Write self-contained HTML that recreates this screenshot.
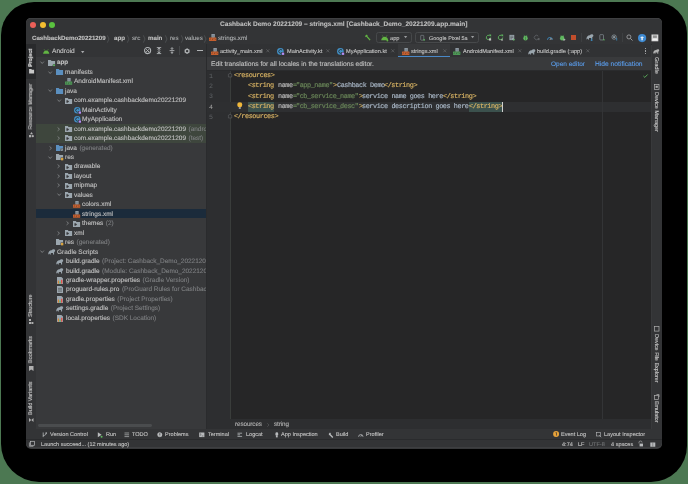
<!DOCTYPE html>
<html><head><meta charset="utf-8"><style>
html,body{margin:0;padding:0;width:688px;height:484px;overflow:hidden;background:#4c7852;}
.t{position:absolute;white-space:nowrap;will-change:transform;text-rendering:geometricPrecision;-webkit-text-stroke:0.12px currentColor;}
.r{position:absolute;}
svg.r{overflow:visible;}
</style></head><body>
<div class="r" style="left:1px;top:2px;width:685.6px;height:479.6px;background:#000;border-radius:33px 31px 36px 38px;"></div>
<div class="r" style="left:26px;top:18px;width:636px;height:430.5px;background:#38393b;border-radius:5px;"></div>
<div class="r" style="left:26px;top:18px;width:636px;height:26px;background:#333436;border-radius:5px 5px 0 0;box-shadow:inset 0 0.5px 0 #4a4b4d;"></div>
<div class="r" style="left:30.05px;top:21.6px;width:6px;height:6px;border-radius:50%;background:#ec5f58;"></div>
<div class="r" style="left:39.70px;top:21.6px;width:6px;height:6px;border-radius:50%;background:#f4bd30;"></div>
<div class="r" style="left:49.00px;top:21.6px;width:6px;height:6px;border-radius:50%;background:#5ac23f;"></div>
<div class="t" style="left:220.40px;top:20.10px;font-size:6.58px;line-height:10px;color:#bdbdbd;font-weight:bold;font-family:'Liberation Sans', sans-serif;">Cashback Demo 20221209 – strings.xml [Cashback_Demo_20221209.app.main]</div>
<div class="t" style="left:32.30px;top:33.60px;font-size:6.16px;line-height:10px;color:#c0c0c0;font-weight:bold;font-family:'Liberation Sans', sans-serif;">CashbackDemo20221209</div>
<div class="t" style="left:113.70px;top:33.60px;font-size:6.16px;line-height:10px;color:#c0c0c0;font-weight:bold;font-family:'Liberation Sans', sans-serif;">app</div>
<div class="t" style="left:132.00px;top:33.60px;font-size:6.16px;line-height:10px;color:#a9abad;font-weight:normal;font-family:'Liberation Sans', sans-serif;">src</div>
<div class="t" style="left:148.30px;top:33.60px;font-size:6.16px;line-height:10px;color:#c0c0c0;font-weight:bold;font-family:'Liberation Sans', sans-serif;">main</div>
<div class="t" style="left:169.70px;top:33.60px;font-size:6.16px;line-height:10px;color:#a9abad;font-weight:normal;font-family:'Liberation Sans', sans-serif;">res</div>
<div class="t" style="left:185.40px;top:33.60px;font-size:6.16px;line-height:10px;color:#a9abad;font-weight:normal;font-family:'Liberation Sans', sans-serif;">values</div>
<div class="t" style="left:217.90px;top:33.60px;font-size:6.16px;line-height:10px;color:#a9abad;font-weight:normal;font-family:'Liberation Sans', sans-serif;">strings.xml</div>
<svg class="r" style="left:107.40px;top:34.60px;" width="2.4" height="8" viewBox="0 0 2.4 8"><path d="M0.3 0.3L2 4L0.3 7.7" stroke="#5d5f61" stroke-width="0.6" fill="none"/></svg>
<svg class="r" style="left:127.00px;top:34.60px;" width="2.4" height="8" viewBox="0 0 2.4 8"><path d="M0.3 0.3L2 4L0.3 7.7" stroke="#5d5f61" stroke-width="0.6" fill="none"/></svg>
<svg class="r" style="left:143.30px;top:34.60px;" width="2.4" height="8" viewBox="0 0 2.4 8"><path d="M0.3 0.3L2 4L0.3 7.7" stroke="#5d5f61" stroke-width="0.6" fill="none"/></svg>
<svg class="r" style="left:164.60px;top:34.60px;" width="2.4" height="8" viewBox="0 0 2.4 8"><path d="M0.3 0.3L2 4L0.3 7.7" stroke="#5d5f61" stroke-width="0.6" fill="none"/></svg>
<svg class="r" style="left:180.80px;top:34.60px;" width="2.4" height="8" viewBox="0 0 2.4 8"><path d="M0.3 0.3L2 4L0.3 7.7" stroke="#5d5f61" stroke-width="0.6" fill="none"/></svg>
<svg class="r" style="left:204.30px;top:34.60px;" width="2.4" height="8" viewBox="0 0 2.4 8"><path d="M0.3 0.3L2 4L0.3 7.7" stroke="#5d5f61" stroke-width="0.6" fill="none"/></svg>
<svg class="r" style="left:209.20px;top:34.30px;" width="7.4" height="7" viewBox="0 0 7.2 6.8"><rect x="2.4" y="0" width="3.2" height="3.6" fill="#9ba6ae"/><path d="M3.1 1.1h1.8M3.1 2.2h1.8" stroke="#4a5a6a" stroke-width="0.45"/><rect x="0" y="3.4" width="7.2" height="3.4" rx="0.4" fill="#c9602e"/><path d="M1.6 4.3l-0.7 0.8 0.7 0.8M3.2 6l0.8-1.8M5.6 4.3l0.7 0.8-0.7 0.8" stroke="#2b2b2b" stroke-width="0.4" fill="none"/></svg>
<svg class="r" style="left:363.50px;top:33.80px;" width="7.5" height="7.5" viewBox="0 0 16 16"><path d="M2 4l4-3 2 2-1 1 7 8-2 2-7-8-1 1z" fill="#62b543"/></svg>
<div class="r" style="left:376.3px;top:32.3px;width:35.4px;height:10.3px;border:0.7px solid #47494b;border-radius:2.5px;box-sizing:border-box;"></div>
<svg class="r" style="left:381.20px;top:34.60px;" width="7.4" height="6.4" viewBox="0 0 7.4 6.4"><path d="M0.2 5.2C0.4 3.2 1.8 1.7 3.7 1.7S7 3.2 7.2 5.2z" fill="#62b543"/><path d="M1.3 0.3l.9 1.5M6.1 0.3l-.9 1.5" stroke="#62b543" stroke-width="0.5"/><circle cx="6.4" cy="5.6" r="0.9" fill="#62b543"/></svg>
<div class="t" style="left:390.00px;top:33.50px;font-size:5.69px;line-height:10px;color:#c0c0c0;font-weight:normal;font-family:'Liberation Sans', sans-serif;">app</div>
<svg class="r" style="left:403.80px;top:36.30px;" width="3.2" height="2.2" viewBox="0 0 3.2 2.2"><path d="M0 0h3.2L1.6 2.2z" fill="#9a9c9e"/></svg>
<div class="r" style="left:414.7px;top:32.3px;width:64.8px;height:10.3px;border:0.7px solid #47494b;border-radius:2.5px;box-sizing:border-box;"></div>
<svg class="r" style="left:420.30px;top:33.80px;" width="5.5" height="7.5" viewBox="0 0 16 16"><rect x="2" y="1" width="9" height="14" rx="1.5" fill="none" stroke="#9aa5ad" stroke-width="1.4"/><circle cx="12" cy="14" r="2.5" fill="#5fb85f"/></svg>
<div class="t" style="left:428.60px;top:33.50px;font-size:5.48px;line-height:10px;color:#c0c0c0;font-weight:normal;font-family:'Liberation Sans', sans-serif;">Google Pixel 5a</div>
<svg class="r" style="left:471.40px;top:36.30px;" width="3.2" height="2.2" viewBox="0 0 3.2 2.2"><path d="M0 0h3.2L1.6 2.2z" fill="#9a9c9e"/></svg>
<svg class="r" style="left:484.50px;top:34.00px;" width="7" height="7" viewBox="0 0 16 16"><path d="M13 8a5 5 0 1 1-2-4" stroke="#5fb85f" stroke-width="2" fill="none"/><path d="M9 1h5v5z" fill="#5fb85f"/><rect x="9" y="10" width="5" height="5" fill="#c0c0c0"/></svg>
<svg class="r" style="left:496.80px;top:34.00px;" width="7" height="7" viewBox="0 0 16 16"><path d="M13 8a5 5 0 1 1-2-4" stroke="#5fb85f" stroke-width="2" fill="none"/><path d="M9 1h5v5z" fill="#5fb85f"/><path d="M9 15l2.5-5 2.5 5z" fill="#c0c0c0"/></svg>
<svg class="r" style="left:509.00px;top:34.00px;" width="7" height="7" viewBox="0 0 16 16"><rect x="1" y="2" width="11" height="12" fill="#9aa5ad"/><path d="M3 5h7M3 8h7M3 11h4" stroke="#333" stroke-width="1"/><path d="M10 10l4 3-4 3z" fill="#5fb85f"/></svg>
<svg class="r" style="left:521.50px;top:34.00px;" width="7" height="7" viewBox="0 0 16 16"><ellipse cx="8" cy="9.5" rx="5" ry="5.5" fill="#5fb85f"/><path d="M4 2l2 2M12 2l-2 2" stroke="#5fb85f" stroke-width="1.3"/><path d="M8 6v8" stroke="#2f3133" stroke-width="0.8"/></svg>
<svg class="r" style="left:533.30px;top:34.00px;" width="7" height="7" viewBox="0 0 16 16"><path d="M12 5a5 5 0 1 0 0 6" stroke="#5d6063" stroke-width="2" fill="none"/><path d="M11 9h4v5h-4z" fill="#5d6063"/></svg>
<svg class="r" style="left:545.60px;top:34.50px;" width="7.8" height="6.5" viewBox="0 0 16 16"><path d="M2 12a6 6 0 0 1 12 0" stroke="#3d8fc6" stroke-width="2" fill="none"/><path d="M8 12l3-5" stroke="#c0c0c0" stroke-width="1.6"/><path d="M10 12a4 4 0 0 1 4-3" stroke="#c0c0c0" stroke-width="1.2" fill="none"/></svg>
<svg class="r" style="left:558.80px;top:34.00px;" width="7.2" height="7" viewBox="0 0 16 16"><ellipse cx="7" cy="9.5" rx="5" ry="5.5" fill="#5fb85f"/><path d="M3 2l2 2M11 2l-2 2" stroke="#5fb85f" stroke-width="1.3"/><path d="M10 10l5 3-5 3z" fill="#c0c0c0"/></svg>
<div class="r" style="left:571.40px;top:35.20px;width:5.00px;height:5.00px;background:#c24e2c;"></div>
<div class="r" style="left:581.40px;top:33.00px;width:0.60px;height:9.00px;background:#3d3f41;"></div>
<svg class="r" style="left:585.60px;top:34.20px;" width="7.8" height="7" viewBox="0 0 7.4 7"><path d="M0.2 5.4C0.2 3 1.4 1.2 3.6 1.2 4.4 0.2 6 0 6.8 0.7 7.4 1.2 7.3 2.1 6.8 2.5L6.1 3.2V5.4H5V4.1H2.8V5.4H1.8V4.4C1.3 4.8 0.8 5.1 0.2 5.4z" fill="#9ba6ae"/><path d="M5.4 4.2v2.6M4.4 5.9l1 1 1-1" stroke="#3d8fc6" stroke-width="0.8" fill="none"/></svg>
<svg class="r" style="left:599.30px;top:34.00px;" width="6.5" height="7" viewBox="0 0 16 16"><rect x="2" y="1" width="9" height="13" rx="1.5" fill="none" stroke="#9aa5ad" stroke-width="1.4"/><path d="M9 15l3-4 3 4z" fill="#5fb85f"/></svg>
<svg class="r" style="left:610.70px;top:34.00px;" width="7" height="7" viewBox="0 0 16 16"><circle cx="7" cy="7" r="5" fill="none" stroke="#9aa5ad" stroke-width="1.6"/><rect x="5" y="5" width="4" height="4" fill="#9aa5ad"/><path d="M13 9v6" stroke="#3d8fc6" stroke-width="1.8"/></svg>
<div class="r" style="left:622.00px;top:33.00px;width:0.60px;height:9.00px;background:#3d3f41;"></div>
<svg class="r" style="left:626.00px;top:34.00px;" width="7.2" height="7.2" viewBox="0 0 16 16"><circle cx="6.5" cy="6.5" r="4.5" fill="none" stroke="#b5b7b9" stroke-width="1.6"/><path d="M10 10l4.5 4.5" stroke="#b5b7b9" stroke-width="1.8"/></svg>
<svg class="r" style="left:638.00px;top:33.60px;" width="8.2" height="8.2" viewBox="0 0 16 16"><circle cx="8" cy="8" r="8" fill="#3e8ad2"/><path d="M4 8l4-3.5 4 3.5h-2.5v4h-3v-4z" fill="#e8eef5"/></svg>
<svg class="r" style="left:650.50px;top:33.70px;" width="7.8" height="7.8" viewBox="0 0 16 16"><rect x="1" y="1" width="14" height="14" fill="#d8d8d8"/><rect x="4" y="3" width="8" height="5" fill="#8f8f8f"/><rect x="3" y="10" width="10" height="3" fill="#f2f2f2"/></svg>
<div class="r" style="left:26.00px;top:43.60px;width:636.00px;height:0.70px;background:#2a2b2d;"></div>
<div class="r" style="left:26.00px;top:44.30px;width:9.70px;height:384.70px;background:#333436;"></div>
<div class="r" style="left:26.00px;top:44.30px;width:9.70px;height:34.80px;background:#292a2c;"></div>
<div class="r" style="left:35.70px;top:44.30px;width:0.70px;height:384.70px;background:#2a2b2d;"></div>
<div class="t" style="left:27.20px;top:50.00px;width:8px;height:16.80px;line-height:8px;text-align:center;writing-mode:vertical-rl;font-size:5.3px;color:#e0e0e0;font-weight:bold;font-family:'Liberation Sans', sans-serif;transform:rotate(180deg);">Project</div>
<svg class="r" style="left:28.60px;top:69.40px;" width="5.2" height="4.6" viewBox="0 0 5 4.6"><path d="M0 0h2.2l.6.7H5V4.6H0z" fill="#c8c8c8"/></svg>
<div class="t" style="left:26.60px;top:84.00px;width:8px;height:45.50px;line-height:8px;text-align:center;writing-mode:vertical-rl;font-size:5.4px;color:#c6c6c6;font-weight:normal;font-family:'Liberation Sans', sans-serif;transform:rotate(180deg);">Resource Manager</div>
<svg class="r" style="left:28.60px;top:132.00px;" width="5" height="5.5" viewBox="0 0 5 5.5"><path d="M2.5 0L4 2.2H1z" fill="#b0b0b0"/><rect x="0" y="3" width="2.2" height="2.3" fill="#b0b0b0"/><circle cx="3.8" cy="4.2" r="1.1" fill="#b0b0b0"/></svg>
<div class="t" style="left:27.20px;top:293.60px;width:8px;height:23.20px;line-height:8px;text-align:center;writing-mode:vertical-rl;font-size:5.6px;color:#c6c6c6;font-weight:normal;font-family:'Liberation Sans', sans-serif;transform:rotate(180deg);">Structure</div>
<svg class="r" style="left:29.00px;top:319.00px;" width="4.6" height="5.6" viewBox="0 0 4.6 5.6"><rect x="0" y="0" width="2" height="2" fill="#b0b0b0"/><rect x="2.4" y="3" width="2" height="2" fill="#b0b0b0"/><rect x="0" y="3" width="2" height="2" fill="#b0b0b0"/></svg>
<div class="t" style="left:27.20px;top:336.30px;width:8px;height:27.30px;line-height:8px;text-align:center;writing-mode:vertical-rl;font-size:5.45px;color:#c6c6c6;font-weight:normal;font-family:'Liberation Sans', sans-serif;transform:rotate(180deg);">Bookmarks</div>
<svg class="r" style="left:29.00px;top:366.00px;" width="4.5" height="5" viewBox="0 0 4.5 5"><path d="M0 0h4.5v5L2.25 3.5 0 5z" fill="#b0b0b0"/></svg>
<div class="t" style="left:27.20px;top:381.30px;width:8px;height:34.10px;line-height:8px;text-align:center;writing-mode:vertical-rl;font-size:5.5px;color:#c6c6c6;font-weight:normal;font-family:'Liberation Sans', sans-serif;transform:rotate(180deg);">Build Variants</div>
<svg class="r" style="left:29.00px;top:418.00px;" width="4.5" height="4" viewBox="0 0 4.5 4"><path d="M0 0L2.25 2 4.5 0v4L2.25 2 0 4z" fill="#b0b0b0"/></svg>
<div class="r" style="left:36.40px;top:44.30px;width:169.60px;height:384.70px;background:#38393b;"></div>
<div class="r" style="left:36.40px;top:44.30px;width:169.60px;height:12.80px;background:#333436;"></div>
<div class="r" style="left:206.00px;top:44.30px;width:0.70px;height:384.70px;background:#2a2b2d;"></div>
<svg class="r" style="left:42.80px;top:48.60px;" width="6.4" height="4.8" viewBox="0 0 6.4 4.8"><path d="M0.1 4.8C0.3 2.9 1.5 1.4 3.2 1.4S6.1 2.9 6.3 4.8z" fill="#62b543"/><path d="M1.1 0.2l.8 1.4M5.3 0.2l-.8 1.4" stroke="#62b543" stroke-width="0.45"/></svg>
<div class="t" style="left:51.80px;top:47.20px;font-size:6.61px;line-height:10px;color:#c0c0c0;font-weight:normal;font-family:'Liberation Sans', sans-serif;">Android</div>
<svg class="r" style="left:81.00px;top:50.90px;" width="3.4" height="2.2" viewBox="0 0 3.4 2.2"><path d="M0 0h3.4L1.7 2.2z" fill="#a8aaac"/></svg>
<svg class="r" style="left:143.80px;top:47.30px;" width="7.2" height="7.2" viewBox="0 0 7.2 7.2"><circle cx="3.6" cy="3.6" r="3.05" fill="none" stroke="#b0b3b5" stroke-width="1.1"/><path d="M2.2 2.2l2.8 2.8M5 2.2L2.2 5" stroke="#b0b3b5" stroke-width="1"/></svg>
<svg class="r" style="left:156.20px;top:47.30px;" width="6" height="7.2" viewBox="0 0 6 7.2"><path d="M0.8 0.6h4.4M0.8 6.6h4.4M3 1.2v4.8M1.6 2.4L3 1.1 4.4 2.4M1.6 4.8L3 6.1 4.4 4.8" stroke="#b0b3b5" stroke-width="0.9" fill="none"/></svg>
<svg class="r" style="left:169.10px;top:47.30px;" width="6" height="7.2" viewBox="0 0 6 7.2"><path d="M0.6 3.6h4.8M3 0.2v2.2M3 4.8V7M1.8 1.2L3 2.4 4.2 1.2M1.8 6L3 4.8 4.2 6" stroke="#b0b3b5" stroke-width="0.9" fill="none"/></svg>
<div class="r" style="left:179.00px;top:46.40px;width:0.60px;height:8.60px;background:#46484a;"></div>
<svg class="r" style="left:184.40px;top:47.80px;" width="6.2" height="6.2" viewBox="0 0 6.2 6.2"><path d="M3.1 0.2L5.6 1.65V4.55L3.1 6L0.6 4.55V1.65z" fill="#b0b3b5"/><circle cx="3.1" cy="3.1" r="1.2" fill="#333436"/></svg>
<div class="r" style="left:197.10px;top:50.40px;width:5.80px;height:1.00px;background:#b0b3b5;"></div>
<div class="r" style="left:36.40px;top:124.40px;width:169.60px;height:18.60px;background:#3e463d;"></div>
<div class="r" style="left:36.40px;top:208.80px;width:169.60px;height:9.10px;background:#1b2b3b;"></div>
<div style="position:absolute;left:36.4px;top:57.1px;width:169.6px;height:366px;overflow:hidden;">
<svg class="r" style="left:3.60px;top:4.00px;" width="4.4" height="3.2" viewBox="0 0 4.4 3.2"><path d="M0.5 0.6L2.2 2.5L3.9 0.6" stroke="#8d8f91" stroke-width="0.75" fill="none"/></svg>
<svg class="r" style="left:11.90px;top:2.70px;" width="7.1" height="6.0" viewBox="0 0 7.4 6.2"><path d="M0 0h2.9l0.8 0.9H7.4V6.2H0z" fill="#9ba6ae"/><circle cx="6.3" cy="5.5" r="1.4" fill="#38393b"/><circle cx="6.3" cy="5.5" r="1.05" fill="#5fb85f"/></svg>
<div class="t" style="left:20.60px;top:1.40px;font-size:6.3px;line-height:10px;color:#c0c0c0;font-weight:bold;font-family:'Liberation Sans', sans-serif;">app</div>
<svg class="r" style="left:11.80px;top:13.46px;" width="4.4" height="3.2" viewBox="0 0 4.4 3.2"><path d="M0.5 0.6L2.2 2.5L3.9 0.6" stroke="#8d8f91" stroke-width="0.75" fill="none"/></svg>
<svg class="r" style="left:19.90px;top:12.15px;" width="7.1" height="6.0" viewBox="0 0 7.4 6.2"><path d="M0 0h2.9l0.8 0.9H7.4V6.2H0z" fill="#5b8fbf"/></svg>
<div class="t" style="left:28.60px;top:10.86px;font-size:6.5px;line-height:10px;color:#c0c0c0;font-weight:normal;font-family:'Liberation Sans', sans-serif;">manifests</div>
<svg class="r" style="left:29.10px;top:21.21px;" width="7.2" height="6.8" viewBox="0 0 7.2 6.8"><rect x="2.4" y="0" width="3.2" height="3.6" fill="#9ba6ae"/><path d="M3.1 1.1h1.8M3.1 2.2h1.8" stroke="#4a5a6a" stroke-width="0.45"/><rect x="0" y="3.4" width="7.2" height="3.4" rx="0.4" fill="#4e9a57"/><path d="M1.6 4.3l-0.7 0.8 0.7 0.8M3.2 6l0.8-1.8M5.6 4.3l0.7 0.8-0.7 0.8" stroke="#2b2b2b" stroke-width="0.4" fill="none"/></svg>
<div class="t" style="left:37.70px;top:20.31px;font-size:6.5px;line-height:10px;color:#c0c0c0;font-weight:normal;font-family:'Liberation Sans', sans-serif;">AndroidManifest.xml</div>
<svg class="r" style="left:11.80px;top:32.36px;" width="4.4" height="3.2" viewBox="0 0 4.4 3.2"><path d="M0.5 0.6L2.2 2.5L3.9 0.6" stroke="#8d8f91" stroke-width="0.75" fill="none"/></svg>
<svg class="r" style="left:19.90px;top:31.06px;" width="7.1" height="6.0" viewBox="0 0 7.4 6.2"><path d="M0 0h2.9l0.8 0.9H7.4V6.2H0z" fill="#5b8fbf"/></svg>
<div class="t" style="left:28.60px;top:29.76px;font-size:6.5px;line-height:10px;color:#c0c0c0;font-weight:normal;font-family:'Liberation Sans', sans-serif;">java</div>
<svg class="r" style="left:20.30px;top:41.82px;" width="4.4" height="3.2" viewBox="0 0 4.4 3.2"><path d="M0.5 0.6L2.2 2.5L3.9 0.6" stroke="#8d8f91" stroke-width="0.75" fill="none"/></svg>
<svg class="r" style="left:29.00px;top:40.52px;" width="7.1" height="6.0" viewBox="0 0 7.4 6.2"><path d="M0 0h2.9l0.8 0.9H7.4V6.2H0z" fill="#9ba6ae"/><path d="M1.5 2.3h1.2l1.6 1.3-1.6 1.3H1.5z" fill="#3a3b3d"/></svg>
<div class="t" style="left:37.70px;top:39.22px;font-size:6.45px;line-height:10px;color:#c0c0c0;font-weight:normal;font-family:'Liberation Sans', sans-serif;">com.example.cashbackdemo20221209</div>
<svg class="r" style="left:37.30px;top:49.57px;" width="7" height="6.8" viewBox="0 0 7 6.8"><circle cx="3.3" cy="3.3" r="3.2" fill="#4191c8"/><path d="M4.9 2.1a1.8 1.8 0 1 0 0 2.4" stroke="#2a2b2d" stroke-width="0.9" fill="none"/><rect x="4.4" y="4.2" width="2.6" height="2.6" fill="#38393b"/><path d="M4.8 4.5h2.2v2.2H4.8z" fill="#b58cf5"/></svg>
<div class="t" style="left:45.70px;top:48.67px;font-size:6.5px;line-height:10px;color:#c0c0c0;font-weight:normal;font-family:'Liberation Sans', sans-serif;">MainActivity</div>
<svg class="r" style="left:37.30px;top:59.03px;" width="7" height="6.8" viewBox="0 0 7 6.8"><circle cx="3.3" cy="3.3" r="3.2" fill="#4191c8"/><path d="M4.9 2.1a1.8 1.8 0 1 0 0 2.4" stroke="#2a2b2d" stroke-width="0.9" fill="none"/><rect x="4.4" y="4.2" width="2.6" height="2.6" fill="#38393b"/><path d="M4.8 4.5h2.2v2.2H4.8z" fill="#b58cf5"/></svg>
<div class="t" style="left:45.70px;top:58.13px;font-size:6.5px;line-height:10px;color:#c0c0c0;font-weight:normal;font-family:'Liberation Sans', sans-serif;">MyApplication</div>
<svg class="r" style="left:20.90px;top:69.58px;" width="3.2" height="4.4" viewBox="0 0 3.2 4.4"><path d="M0.6 0.5L2.5 2.2L0.6 3.9" stroke="#8d8f91" stroke-width="0.75" fill="none"/></svg>
<svg class="r" style="left:29.00px;top:68.88px;" width="7.1" height="6.0" viewBox="0 0 7.4 6.2"><path d="M0 0h2.9l0.8 0.9H7.4V6.2H0z" fill="#9ba6ae"/><path d="M1.5 2.3h1.2l1.6 1.3-1.6 1.3H1.5z" fill="#3a3b3d"/></svg>
<div class="t" style="left:37.70px;top:67.58px;font-size:6.45px;line-height:10px;color:#c0c0c0;font-weight:normal;font-family:'Liberation Sans', sans-serif;">com.example.cashbackdemo20221209 <span style="color:#7d7f81;margin-left:0.7px;font-size:6.45px">(androidTest)</span></div>
<svg class="r" style="left:20.90px;top:79.04px;" width="3.2" height="4.4" viewBox="0 0 3.2 4.4"><path d="M0.6 0.5L2.5 2.2L0.6 3.9" stroke="#8d8f91" stroke-width="0.75" fill="none"/></svg>
<svg class="r" style="left:29.00px;top:78.34px;" width="7.1" height="6.0" viewBox="0 0 7.4 6.2"><path d="M0 0h2.9l0.8 0.9H7.4V6.2H0z" fill="#9ba6ae"/><path d="M1.5 2.3h1.2l1.6 1.3-1.6 1.3H1.5z" fill="#3a3b3d"/></svg>
<div class="t" style="left:37.70px;top:77.04px;font-size:6.45px;line-height:10px;color:#c0c0c0;font-weight:normal;font-family:'Liberation Sans', sans-serif;">com.example.cashbackdemo20221209 <span style="color:#7d7f81;margin-left:0.7px;font-size:6.45px">(test)</span></div>
<svg class="r" style="left:12.40px;top:88.50px;" width="3.2" height="4.4" viewBox="0 0 3.2 4.4"><path d="M0.6 0.5L2.5 2.2L0.6 3.9" stroke="#8d8f91" stroke-width="0.75" fill="none"/></svg>
<svg class="r" style="left:19.90px;top:87.80px;" width="7.1" height="6.0" viewBox="0 0 7.4 6.2"><path d="M0 0h2.9l0.8 0.9H7.4V6.2H0z" fill="#5b8fbf"/><circle cx="6" cy="5" r="1.7" fill="#38393b"/><circle cx="6" cy="5" r="1.3" fill="#9ba6ae"/><circle cx="6" cy="5" r="0.5" fill="#38393b"/></svg>
<div class="t" style="left:28.60px;top:86.50px;font-size:6.5px;line-height:10px;color:#c0c0c0;font-weight:normal;font-family:'Liberation Sans', sans-serif;">java <span style="color:#7d7f81;margin-left:0.7px;font-size:6.45px">(generated)</span></div>
<svg class="r" style="left:11.80px;top:98.55px;" width="4.4" height="3.2" viewBox="0 0 4.4 3.2"><path d="M0.5 0.6L2.2 2.5L3.9 0.6" stroke="#8d8f91" stroke-width="0.75" fill="none"/></svg>
<svg class="r" style="left:19.90px;top:97.25px;" width="7.1" height="6.0" viewBox="0 0 7.4 6.2"><path d="M0 0h2.9l0.8 0.9H7.4V6.2H0z" fill="#9ba6ae"/><rect x="4.8" y="3.6" width="2.9" height="2.9" fill="#38393b"/><rect x="5.2" y="4" width="2.4" height="2.6" fill="#d9a33e"/></svg>
<div class="t" style="left:28.60px;top:95.95px;font-size:6.5px;line-height:10px;color:#c0c0c0;font-weight:normal;font-family:'Liberation Sans', sans-serif;">res</div>
<svg class="r" style="left:20.90px;top:107.40px;" width="3.2" height="4.4" viewBox="0 0 3.2 4.4"><path d="M0.6 0.5L2.5 2.2L0.6 3.9" stroke="#8d8f91" stroke-width="0.75" fill="none"/></svg>
<svg class="r" style="left:29.00px;top:106.70px;" width="7.1" height="6.0" viewBox="0 0 7.4 6.2"><path d="M0 0h2.9l0.8 0.9H7.4V6.2H0z" fill="#9ba6ae"/><path d="M1.5 2.3h1.2l1.6 1.3-1.6 1.3H1.5z" fill="#3a3b3d"/></svg>
<div class="t" style="left:37.70px;top:105.40px;font-size:6.5px;line-height:10px;color:#c0c0c0;font-weight:normal;font-family:'Liberation Sans', sans-serif;">drawable</div>
<svg class="r" style="left:20.90px;top:116.86px;" width="3.2" height="4.4" viewBox="0 0 3.2 4.4"><path d="M0.6 0.5L2.5 2.2L0.6 3.9" stroke="#8d8f91" stroke-width="0.75" fill="none"/></svg>
<svg class="r" style="left:29.00px;top:116.16px;" width="7.1" height="6.0" viewBox="0 0 7.4 6.2"><path d="M0 0h2.9l0.8 0.9H7.4V6.2H0z" fill="#9ba6ae"/><path d="M1.5 2.3h1.2l1.6 1.3-1.6 1.3H1.5z" fill="#3a3b3d"/></svg>
<div class="t" style="left:37.70px;top:114.86px;font-size:6.5px;line-height:10px;color:#c0c0c0;font-weight:normal;font-family:'Liberation Sans', sans-serif;">layout</div>
<svg class="r" style="left:20.90px;top:126.32px;" width="3.2" height="4.4" viewBox="0 0 3.2 4.4"><path d="M0.6 0.5L2.5 2.2L0.6 3.9" stroke="#8d8f91" stroke-width="0.75" fill="none"/></svg>
<svg class="r" style="left:29.00px;top:125.62px;" width="7.1" height="6.0" viewBox="0 0 7.4 6.2"><path d="M0 0h2.9l0.8 0.9H7.4V6.2H0z" fill="#9ba6ae"/><path d="M1.5 2.3h1.2l1.6 1.3-1.6 1.3H1.5z" fill="#3a3b3d"/></svg>
<div class="t" style="left:37.70px;top:124.32px;font-size:6.5px;line-height:10px;color:#c0c0c0;font-weight:normal;font-family:'Liberation Sans', sans-serif;">mipmap</div>
<svg class="r" style="left:20.30px;top:136.37px;" width="4.4" height="3.2" viewBox="0 0 4.4 3.2"><path d="M0.5 0.6L2.2 2.5L3.9 0.6" stroke="#8d8f91" stroke-width="0.75" fill="none"/></svg>
<svg class="r" style="left:29.00px;top:135.07px;" width="7.1" height="6.0" viewBox="0 0 7.4 6.2"><path d="M0 0h2.9l0.8 0.9H7.4V6.2H0z" fill="#9ba6ae"/><path d="M1.5 2.3h1.2l1.6 1.3-1.6 1.3H1.5z" fill="#3a3b3d"/></svg>
<div class="t" style="left:37.70px;top:133.77px;font-size:6.5px;line-height:10px;color:#c0c0c0;font-weight:normal;font-family:'Liberation Sans', sans-serif;">values</div>
<svg class="r" style="left:37.10px;top:144.12px;" width="7.2" height="6.8" viewBox="0 0 7.2 6.8"><rect x="2.4" y="0" width="3.2" height="3.6" fill="#9ba6ae"/><path d="M3.1 1.1h1.8M3.1 2.2h1.8" stroke="#4a5a6a" stroke-width="0.45"/><rect x="0" y="3.4" width="7.2" height="3.4" rx="0.4" fill="#c9602e"/><path d="M1.6 4.3l-0.7 0.8 0.7 0.8M3.2 6l0.8-1.8M5.6 4.3l0.7 0.8-0.7 0.8" stroke="#2b2b2b" stroke-width="0.4" fill="none"/></svg>
<div class="t" style="left:45.70px;top:143.22px;font-size:6.5px;line-height:10px;color:#c0c0c0;font-weight:normal;font-family:'Liberation Sans', sans-serif;">colors.xml</div>
<svg class="r" style="left:37.10px;top:153.58px;" width="7.2" height="6.8" viewBox="0 0 7.2 6.8"><rect x="2.4" y="0" width="3.2" height="3.6" fill="#9ba6ae"/><path d="M3.1 1.1h1.8M3.1 2.2h1.8" stroke="#4a5a6a" stroke-width="0.45"/><rect x="0" y="3.4" width="7.2" height="3.4" rx="0.4" fill="#c9602e"/><path d="M1.6 4.3l-0.7 0.8 0.7 0.8M3.2 6l0.8-1.8M5.6 4.3l0.7 0.8-0.7 0.8" stroke="#2b2b2b" stroke-width="0.4" fill="none"/></svg>
<div class="t" style="left:45.70px;top:152.68px;font-size:6.5px;line-height:10px;color:#c0c0c0;font-weight:normal;font-family:'Liberation Sans', sans-serif;">strings.xml</div>
<svg class="r" style="left:29.40px;top:164.14px;" width="3.2" height="4.4" viewBox="0 0 3.2 4.4"><path d="M0.6 0.5L2.5 2.2L0.6 3.9" stroke="#8d8f91" stroke-width="0.75" fill="none"/></svg>
<svg class="r" style="left:37.00px;top:163.44px;" width="7.1" height="6.0" viewBox="0 0 7.4 6.2"><path d="M0 0h2.9l0.8 0.9H7.4V6.2H0z" fill="#9ba6ae"/><path d="M1.5 2.3h1.2l1.6 1.3-1.6 1.3H1.5z" fill="#3a3b3d"/></svg>
<div class="t" style="left:45.70px;top:162.14px;font-size:6.5px;line-height:10px;color:#c0c0c0;font-weight:normal;font-family:'Liberation Sans', sans-serif;">themes <span style="color:#7d7f81;margin-left:0.7px;font-size:6.45px">(2)</span></div>
<svg class="r" style="left:20.90px;top:173.59px;" width="3.2" height="4.4" viewBox="0 0 3.2 4.4"><path d="M0.6 0.5L2.5 2.2L0.6 3.9" stroke="#8d8f91" stroke-width="0.75" fill="none"/></svg>
<svg class="r" style="left:29.00px;top:172.89px;" width="7.1" height="6.0" viewBox="0 0 7.4 6.2"><path d="M0 0h2.9l0.8 0.9H7.4V6.2H0z" fill="#9ba6ae"/><path d="M1.5 2.3h1.2l1.6 1.3-1.6 1.3H1.5z" fill="#3a3b3d"/></svg>
<div class="t" style="left:37.70px;top:171.59px;font-size:6.5px;line-height:10px;color:#c0c0c0;font-weight:normal;font-family:'Liberation Sans', sans-serif;">xml</div>
<svg class="r" style="left:19.90px;top:182.35px;" width="7.1" height="6.0" viewBox="0 0 7.4 6.2"><path d="M0 0h2.9l0.8 0.9H7.4V6.2H0z" fill="#9ba6ae"/><rect x="4.8" y="3.6" width="2.9" height="2.9" fill="#38393b"/><rect x="5.2" y="4" width="2.4" height="2.6" fill="#d9a33e"/></svg>
<div class="t" style="left:28.60px;top:181.05px;font-size:6.5px;line-height:10px;color:#c0c0c0;font-weight:normal;font-family:'Liberation Sans', sans-serif;">res <span style="color:#7d7f81;margin-left:0.7px;font-size:6.45px">(generated)</span></div>
<svg class="r" style="left:3.60px;top:193.10px;" width="4.4" height="3.2" viewBox="0 0 4.4 3.2"><path d="M0.5 0.6L2.2 2.5L3.9 0.6" stroke="#8d8f91" stroke-width="0.75" fill="none"/></svg>
<svg class="r" style="left:11.50px;top:192.10px;" width="7.4" height="5.4" viewBox="0 0 7.4 5.4"><path d="M0.2 5.4C0.2 3 1.4 1.2 3.6 1.2 4.4 0.2 6 0 6.8 0.7 7.4 1.2 7.3 2.1 6.8 2.5L6.1 3.2V5.4H5V4.1H2.8V5.4H1.8V4.4C1.3 4.8 0.8 5.1 0.2 5.4z" fill="#9ba6ae"/></svg>
<div class="t" style="left:20.90px;top:190.50px;font-size:6.5px;line-height:10px;color:#c0c0c0;font-weight:normal;font-family:'Liberation Sans', sans-serif;">Gradle Scripts</div>
<svg class="r" style="left:20.00px;top:201.56px;" width="7.4" height="5.4" viewBox="0 0 7.4 5.4"><path d="M0.2 5.4C0.2 3 1.4 1.2 3.6 1.2 4.4 0.2 6 0 6.8 0.7 7.4 1.2 7.3 2.1 6.8 2.5L6.1 3.2V5.4H5V4.1H2.8V5.4H1.8V4.4C1.3 4.8 0.8 5.1 0.2 5.4z" fill="#9ba6ae"/></svg>
<div class="t" style="left:29.40px;top:199.96px;font-size:6.5px;line-height:10px;color:#c0c0c0;font-weight:normal;font-family:'Liberation Sans', sans-serif;">build.gradle <span style="color:#7d7f81;margin-left:0.7px;font-size:6.45px">(Project: Cashback_Demo_20221209)</span></div>
<svg class="r" style="left:20.00px;top:211.01px;" width="7.4" height="5.4" viewBox="0 0 7.4 5.4"><path d="M0.2 5.4C0.2 3 1.4 1.2 3.6 1.2 4.4 0.2 6 0 6.8 0.7 7.4 1.2 7.3 2.1 6.8 2.5L6.1 3.2V5.4H5V4.1H2.8V5.4H1.8V4.4C1.3 4.8 0.8 5.1 0.2 5.4z" fill="#9ba6ae"/></svg>
<div class="t" style="left:29.40px;top:209.41px;font-size:6.5px;line-height:10px;color:#c0c0c0;font-weight:normal;font-family:'Liberation Sans', sans-serif;">build.gradle <span style="color:#7d7f81;margin-left:0.7px;font-size:6.45px">(Module: Cashback_Demo_20221209.app)</span></div>
<svg class="r" style="left:20.50px;top:219.67px;" width="6" height="7" viewBox="0 0 6 7"><path d="M0 0h4.4l1.6 1.6V7H0z" fill="#9ba6ae"/><rect x="0.8" y="3.6" width="1.2" height="3" fill="#d9843a"/><rect x="2.4" y="4.6" width="1.2" height="2" fill="#5fb85f"/><rect x="4" y="2.8" width="1.4" height="3.8" fill="#e0524a"/></svg>
<div class="t" style="left:29.40px;top:218.87px;font-size:6.5px;line-height:10px;color:#c0c0c0;font-weight:normal;font-family:'Liberation Sans', sans-serif;">gradle-wrapper.properties <span style="color:#7d7f81;margin-left:0.7px;font-size:6.45px">(Gradle Version)</span></div>
<svg class="r" style="left:20.50px;top:229.12px;" width="6" height="7" viewBox="0 0 6 7"><path d="M0 0h4.4l1.6 1.6V7H0z" fill="#9ba6ae"/><path d="M1 2.4h4M1 3.8h4M1 5.2h4" stroke="#3b3d3f" stroke-width="0.5"/></svg>
<div class="t" style="left:29.40px;top:228.32px;font-size:6.5px;line-height:10px;color:#c0c0c0;font-weight:normal;font-family:'Liberation Sans', sans-serif;">proguard-rules.pro <span style="color:#7d7f81;margin-left:0.7px;font-size:6.45px">(ProGuard Rules for Cashback_Demo_20221209.app)</span></div>
<svg class="r" style="left:20.50px;top:238.57px;" width="6" height="7" viewBox="0 0 6 7"><path d="M0 0h4.4l1.6 1.6V7H0z" fill="#9ba6ae"/><rect x="0.8" y="3.6" width="1.2" height="3" fill="#d9843a"/><rect x="2.4" y="4.6" width="1.2" height="2" fill="#5fb85f"/><rect x="4" y="2.8" width="1.4" height="3.8" fill="#e0524a"/></svg>
<div class="t" style="left:29.40px;top:237.78px;font-size:6.5px;line-height:10px;color:#c0c0c0;font-weight:normal;font-family:'Liberation Sans', sans-serif;">gradle.properties <span style="color:#7d7f81;margin-left:0.7px;font-size:6.45px">(Project Properties)</span></div>
<svg class="r" style="left:20.00px;top:248.83px;" width="7.4" height="5.4" viewBox="0 0 7.4 5.4"><path d="M0.2 5.4C0.2 3 1.4 1.2 3.6 1.2 4.4 0.2 6 0 6.8 0.7 7.4 1.2 7.3 2.1 6.8 2.5L6.1 3.2V5.4H5V4.1H2.8V5.4H1.8V4.4C1.3 4.8 0.8 5.1 0.2 5.4z" fill="#9ba6ae"/></svg>
<div class="t" style="left:29.40px;top:247.23px;font-size:6.5px;line-height:10px;color:#c0c0c0;font-weight:normal;font-family:'Liberation Sans', sans-serif;">settings.gradle <span style="color:#7d7f81;margin-left:0.7px;font-size:6.45px">(Project Settings)</span></div>
<svg class="r" style="left:20.50px;top:257.49px;" width="6" height="7" viewBox="0 0 6 7"><path d="M0 0h4.4l1.6 1.6V7H0z" fill="#9ba6ae"/><rect x="0.8" y="3.6" width="1.2" height="3" fill="#d9843a"/><rect x="2.4" y="4.6" width="1.2" height="2" fill="#5fb85f"/><rect x="4" y="2.8" width="1.4" height="3.8" fill="#e0524a"/></svg>
<div class="t" style="left:29.40px;top:256.69px;font-size:6.5px;line-height:10px;color:#c0c0c0;font-weight:normal;font-family:'Liberation Sans', sans-serif;">local.properties <span style="color:#7d7f81;margin-left:0.7px;font-size:6.45px">(SDK Location)</span></div>
</div>
<div class="r" style="left:38px;top:424.4px;width:114px;height:2.8px;border-radius:1.4px;background:#4a4c4e;"></div>
<div class="r" style="left:206.70px;top:44.30px;width:444.80px;height:384.70px;background:#262627;"></div>
<div class="r" style="left:206.70px;top:44.30px;width:444.80px;height:12.80px;background:#313234;"></div>
<div class="r" style="left:206.70px;top:56.80px;width:444.80px;height:0.60px;background:#2a2b2d;"></div>
<div class="r" style="left:397.90px;top:44.30px;width:52.00px;height:12.80px;background:#38393b;"></div>
<div class="r" style="left:397.90px;top:55.80px;width:52.00px;height:1.80px;background:#4a88c7;"></div>
<svg class="r" style="left:210.50px;top:48.00px;" width="7.4" height="7" viewBox="0 0 7.2 6.8"><rect x="2.4" y="0" width="3.2" height="3.6" fill="#9ba6ae"/><path d="M3.1 1.1h1.8M3.1 2.2h1.8" stroke="#4a5a6a" stroke-width="0.45"/><rect x="0" y="3.4" width="7.2" height="3.4" rx="0.4" fill="#c9602e"/><path d="M1.6 4.3l-0.7 0.8 0.7 0.8M3.2 6l0.8-1.8M5.6 4.3l0.7 0.8-0.7 0.8" stroke="#2b2b2b" stroke-width="0.4" fill="none"/></svg>
<div class="t" style="left:219.80px;top:46.90px;font-size:5.6px;line-height:10px;color:#c0c0c0;font-weight:normal;font-family:'Liberation Sans', sans-serif;">activity_main.xml</div>
<svg class="r" style="left:266.30px;top:49.40px;" width="3.6" height="3.6" viewBox="0 0 3.6 3.6"><path d="M0.3 0.3L3.3 3.3M3.3 0.3L0.3 3.3" stroke="#6b6d6f" stroke-width="0.6"/></svg>
<svg class="r" style="left:277.20px;top:47.90px;" width="7.2" height="7" viewBox="0 0 7 6.8"><circle cx="3.3" cy="3.3" r="3.2" fill="#4191c8"/><path d="M4.9 2.1a1.8 1.8 0 1 0 0 2.4" stroke="#2a2b2d" stroke-width="0.9" fill="none"/><rect x="4.4" y="4.2" width="2.6" height="2.6" fill="#38393b"/><path d="M4.8 4.5h2.2v2.2H4.8z" fill="#b58cf5"/></svg>
<div class="t" style="left:286.70px;top:46.90px;font-size:5.6px;line-height:10px;color:#c0c0c0;font-weight:normal;font-family:'Liberation Sans', sans-serif;">MainActivity.kt</div>
<svg class="r" style="left:326.20px;top:49.40px;" width="3.6" height="3.6" viewBox="0 0 3.6 3.6"><path d="M0.3 0.3L3.3 3.3M3.3 0.3L0.3 3.3" stroke="#6b6d6f" stroke-width="0.6"/></svg>
<svg class="r" style="left:337.00px;top:47.90px;" width="7.2" height="7" viewBox="0 0 7 6.8"><circle cx="3.3" cy="3.3" r="3.2" fill="#4191c8"/><path d="M4.9 2.1a1.8 1.8 0 1 0 0 2.4" stroke="#2a2b2d" stroke-width="0.9" fill="none"/><rect x="4.4" y="4.2" width="2.6" height="2.6" fill="#38393b"/><path d="M4.8 4.5h2.2v2.2H4.8z" fill="#b58cf5"/></svg>
<div class="t" style="left:345.80px;top:46.90px;font-size:5.6px;line-height:10px;color:#c0c0c0;font-weight:normal;font-family:'Liberation Sans', sans-serif;">MyApplication.kt</div>
<svg class="r" style="left:391.30px;top:49.40px;" width="3.6" height="3.6" viewBox="0 0 3.6 3.6"><path d="M0.3 0.3L3.3 3.3M3.3 0.3L0.3 3.3" stroke="#6b6d6f" stroke-width="0.6"/></svg>
<svg class="r" style="left:402.40px;top:48.00px;" width="7.4" height="7" viewBox="0 0 7.2 6.8"><rect x="2.4" y="0" width="3.2" height="3.6" fill="#9ba6ae"/><path d="M3.1 1.1h1.8M3.1 2.2h1.8" stroke="#4a5a6a" stroke-width="0.45"/><rect x="0" y="3.4" width="7.2" height="3.4" rx="0.4" fill="#c9602e"/><path d="M1.6 4.3l-0.7 0.8 0.7 0.8M3.2 6l0.8-1.8M5.6 4.3l0.7 0.8-0.7 0.8" stroke="#2b2b2b" stroke-width="0.4" fill="none"/></svg>
<div class="t" style="left:411.30px;top:46.90px;font-size:5.6px;line-height:10px;color:#c0c0c0;font-weight:normal;font-family:'Liberation Sans', sans-serif;">strings.xml</div>
<svg class="r" style="left:442.70px;top:49.40px;" width="3.6" height="3.6" viewBox="0 0 3.6 3.6"><path d="M0.3 0.3L3.3 3.3M3.3 0.3L0.3 3.3" stroke="#6b6d6f" stroke-width="0.6"/></svg>
<svg class="r" style="left:453.30px;top:48.00px;" width="7.4" height="7" viewBox="0 0 7.2 6.8"><rect x="2.4" y="0" width="3.2" height="3.6" fill="#9ba6ae"/><path d="M3.1 1.1h1.8M3.1 2.2h1.8" stroke="#4a5a6a" stroke-width="0.45"/><rect x="0" y="3.4" width="7.2" height="3.4" rx="0.4" fill="#4e9a57"/><path d="M1.6 4.3l-0.7 0.8 0.7 0.8M3.2 6l0.8-1.8M5.6 4.3l0.7 0.8-0.7 0.8" stroke="#2b2b2b" stroke-width="0.4" fill="none"/></svg>
<div class="t" style="left:462.80px;top:46.90px;font-size:5.6px;line-height:10px;color:#c0c0c0;font-weight:normal;font-family:'Liberation Sans', sans-serif;">AndroidManifest.xml</div>
<svg class="r" style="left:517.60px;top:49.40px;" width="3.6" height="3.6" viewBox="0 0 3.6 3.6"><path d="M0.3 0.3L3.3 3.3M3.3 0.3L0.3 3.3" stroke="#6b6d6f" stroke-width="0.6"/></svg>
<svg class="r" style="left:527.80px;top:48.60px;" width="7.6" height="5.6" viewBox="0 0 7.4 5.4"><path d="M0.2 5.4C0.2 3 1.4 1.2 3.6 1.2 4.4 0.2 6 0 6.8 0.7 7.4 1.2 7.3 2.1 6.8 2.5L6.1 3.2V5.4H5V4.1H2.8V5.4H1.8V4.4C1.3 4.8 0.8 5.1 0.2 5.4z" fill="#9ba6ae"/></svg>
<div class="t" style="left:537.20px;top:46.90px;font-size:5.6px;line-height:10px;color:#c0c0c0;font-weight:normal;font-family:'Liberation Sans', sans-serif;">build.gradle (:app)</div>
<svg class="r" style="left:586.40px;top:49.40px;" width="3.6" height="3.6" viewBox="0 0 3.6 3.6"><path d="M0.3 0.3L3.3 3.3M3.3 0.3L0.3 3.3" stroke="#6b6d6f" stroke-width="0.6"/></svg>
<div class="r" style="left:645.30px;top:48.05px;width:1.00px;height:1.10px;background:#a0a2a4;"></div>
<div class="r" style="left:645.30px;top:50.45px;width:1.00px;height:1.10px;background:#a0a2a4;"></div>
<div class="r" style="left:645.30px;top:52.85px;width:1.00px;height:1.10px;background:#a0a2a4;"></div>
<div class="r" style="left:206.70px;top:57.40px;width:444.80px;height:13.10px;background:#393a3c;"></div>
<div class="r" style="left:206.70px;top:70.10px;width:444.80px;height:0.60px;background:#2a2b2d;"></div>
<div class="t" style="left:210.50px;top:60.20px;font-size:6.69px;line-height:10px;color:#c0c0c0;font-weight:normal;font-family:'Liberation Sans', sans-serif;">Edit translations for all locales in the translations editor.</div>
<div class="t" style="left:551.00px;top:60.20px;font-size:6.5px;line-height:10px;color:#5a9be8;font-weight:normal;font-family:'Liberation Sans', sans-serif;">Open editor</div>
<div class="t" style="left:594.80px;top:60.20px;font-size:6.69px;line-height:10px;color:#5a9be8;font-weight:normal;font-family:'Liberation Sans', sans-serif;">Hide notification</div>
<div class="r" style="left:206.70px;top:70.70px;width:24.30px;height:348.30px;background:#2d2e30;"></div>
<div class="r" style="left:230.40px;top:70.70px;width:0.60px;height:348.30px;background:#3a3d3b;"></div>
<div class="r" style="left:206.70px;top:101.80px;width:444.80px;height:10.00px;background:#2e2f31;"></div>
<div class="r" style="left:602.00px;top:70.70px;width:0.60px;height:348.30px;background:#333436;"></div>
<svg class="r" style="left:642.50px;top:73.80px;" width="5" height="4" viewBox="0 0 5 4"><path d="M0.4 2L1.8 3.4 4.6 0.5" stroke="#5fb85f" stroke-width="0.9" fill="none"/></svg>
<div class="r" style="left:248.40px;top:101.80px;width:25.73px;height:10.00px;background:#3b514d;"></div>
<div class="r" style="left:468.90px;top:101.80px;width:33.07px;height:10.00px;background:#3b514d;"></div>
<div class="t" style="left:209.20px;top:72.00px;font-size:6.6px;line-height:10px;color:#5f6265;font-weight:normal;font-family:'Liberation Mono', monospace;-webkit-text-stroke:0;">1</div>
<div class="t" style="left:233.70px;top:71.20px;font-size:6.8px;line-height:10px;color:#dcb665;font-weight:normal;font-family:'Liberation Mono', monospace;letter-spacing:-0.405px;-webkit-text-stroke:0.15px #dcb665;">&lt;resources&gt;</div>
<div class="t" style="left:209.20px;top:82.20px;font-size:6.6px;line-height:10px;color:#5f6265;font-weight:normal;font-family:'Liberation Mono', monospace;-webkit-text-stroke:0;">2</div>
<div class="t" style="left:248.40px;top:81.40px;font-size:6.8px;line-height:10px;color:#dcb665;font-weight:normal;font-family:'Liberation Mono', monospace;letter-spacing:-0.405px;-webkit-text-stroke:0.15px #dcb665;">&lt;string</div>
<div class="t" style="left:277.80px;top:81.40px;font-size:6.8px;line-height:10px;color:#bababa;font-weight:normal;font-family:'Liberation Mono', monospace;letter-spacing:-0.405px;-webkit-text-stroke:0.15px #bababa;">name</div>
<div class="t" style="left:292.50px;top:81.40px;font-size:6.8px;line-height:10px;color:#6a8759;font-weight:normal;font-family:'Liberation Mono', monospace;letter-spacing:-0.405px;-webkit-text-stroke:0.15px #6a8759;">=</div>
<div class="t" style="left:296.17px;top:81.40px;font-size:6.8px;line-height:10px;color:#6a8759;font-weight:normal;font-family:'Liberation Mono', monospace;letter-spacing:-0.405px;-webkit-text-stroke:0.15px #6a8759;">"app_name"</div>
<div class="t" style="left:332.92px;top:81.40px;font-size:6.8px;line-height:10px;color:#dcb665;font-weight:normal;font-family:'Liberation Mono', monospace;letter-spacing:-0.405px;-webkit-text-stroke:0.15px #dcb665;">&gt;</div>
<div class="t" style="left:336.60px;top:81.40px;font-size:6.8px;line-height:10px;color:#a9b7c6;font-weight:normal;font-family:'Liberation Mono', monospace;letter-spacing:-0.405px;-webkit-text-stroke:0.15px #a9b7c6;">Cashback Demo</div>
<div class="t" style="left:384.38px;top:81.40px;font-size:6.8px;line-height:10px;color:#dcb665;font-weight:normal;font-family:'Liberation Mono', monospace;letter-spacing:-0.405px;-webkit-text-stroke:0.15px #dcb665;">&lt;/string&gt;</div>
<div class="t" style="left:209.20px;top:92.40px;font-size:6.6px;line-height:10px;color:#5f6265;font-weight:normal;font-family:'Liberation Mono', monospace;-webkit-text-stroke:0;">3</div>
<div class="t" style="left:248.40px;top:91.60px;font-size:6.8px;line-height:10px;color:#dcb665;font-weight:normal;font-family:'Liberation Mono', monospace;letter-spacing:-0.405px;-webkit-text-stroke:0.15px #dcb665;">&lt;string</div>
<div class="t" style="left:277.80px;top:91.60px;font-size:6.8px;line-height:10px;color:#bababa;font-weight:normal;font-family:'Liberation Mono', monospace;letter-spacing:-0.405px;-webkit-text-stroke:0.15px #bababa;">name</div>
<div class="t" style="left:292.50px;top:91.60px;font-size:6.8px;line-height:10px;color:#6a8759;font-weight:normal;font-family:'Liberation Mono', monospace;letter-spacing:-0.405px;-webkit-text-stroke:0.15px #6a8759;">=</div>
<div class="t" style="left:296.17px;top:91.60px;font-size:6.8px;line-height:10px;color:#6a8759;font-weight:normal;font-family:'Liberation Mono', monospace;letter-spacing:-0.405px;-webkit-text-stroke:0.15px #6a8759;">"cb_service_name"</div>
<div class="t" style="left:358.65px;top:91.60px;font-size:6.8px;line-height:10px;color:#dcb665;font-weight:normal;font-family:'Liberation Mono', monospace;letter-spacing:-0.405px;-webkit-text-stroke:0.15px #dcb665;">&gt;</div>
<div class="t" style="left:362.32px;top:91.60px;font-size:6.8px;line-height:10px;color:#a9b7c6;font-weight:normal;font-family:'Liberation Mono', monospace;letter-spacing:-0.405px;-webkit-text-stroke:0.15px #a9b7c6;">service name goes here</div>
<div class="t" style="left:443.17px;top:91.60px;font-size:6.8px;line-height:10px;color:#dcb665;font-weight:normal;font-family:'Liberation Mono', monospace;letter-spacing:-0.405px;-webkit-text-stroke:0.15px #dcb665;">&lt;/string&gt;</div>
<div class="t" style="left:209.20px;top:102.60px;font-size:6.6px;line-height:10px;color:#a4a3a3;font-weight:normal;font-family:'Liberation Mono', monospace;-webkit-text-stroke:0;">4</div>
<div class="t" style="left:248.40px;top:101.80px;font-size:6.8px;line-height:10px;color:#dcb665;font-weight:normal;font-family:'Liberation Mono', monospace;letter-spacing:-0.405px;-webkit-text-stroke:0.15px #dcb665;">&lt;string</div>
<div class="t" style="left:277.80px;top:101.80px;font-size:6.8px;line-height:10px;color:#bababa;font-weight:normal;font-family:'Liberation Mono', monospace;letter-spacing:-0.405px;-webkit-text-stroke:0.15px #bababa;">name</div>
<div class="t" style="left:292.50px;top:101.80px;font-size:6.8px;line-height:10px;color:#6a8759;font-weight:normal;font-family:'Liberation Mono', monospace;letter-spacing:-0.405px;-webkit-text-stroke:0.15px #6a8759;">=</div>
<div class="t" style="left:296.17px;top:101.80px;font-size:6.8px;line-height:10px;color:#6a8759;font-weight:normal;font-family:'Liberation Mono', monospace;letter-spacing:-0.405px;-webkit-text-stroke:0.15px #6a8759;">"cb_service_desc"</div>
<div class="t" style="left:358.65px;top:101.80px;font-size:6.8px;line-height:10px;color:#dcb665;font-weight:normal;font-family:'Liberation Mono', monospace;letter-spacing:-0.405px;-webkit-text-stroke:0.15px #dcb665;">&gt;</div>
<div class="t" style="left:362.32px;top:101.80px;font-size:6.8px;line-height:10px;color:#a9b7c6;font-weight:normal;font-family:'Liberation Mono', monospace;letter-spacing:-0.405px;-webkit-text-stroke:0.15px #a9b7c6;">service description goes here</div>
<div class="t" style="left:468.90px;top:101.80px;font-size:6.8px;line-height:10px;color:#dcb665;font-weight:normal;font-family:'Liberation Mono', monospace;letter-spacing:-0.405px;-webkit-text-stroke:0.15px #dcb665;">&lt;/string&gt;</div>
<div class="t" style="left:209.20px;top:112.80px;font-size:6.6px;line-height:10px;color:#5f6265;font-weight:normal;font-family:'Liberation Mono', monospace;-webkit-text-stroke:0;">5</div>
<div class="t" style="left:233.70px;top:112.00px;font-size:6.8px;line-height:10px;color:#dcb665;font-weight:normal;font-family:'Liberation Mono', monospace;letter-spacing:-0.405px;-webkit-text-stroke:0.15px #dcb665;">&lt;/resources&gt;</div>
<svg class="r" style="left:228.40px;top:72.90px;" width="4.2" height="5.2" viewBox="0 0 4.2 5.2"><path d="M0.4 1.2L2.1 0.3 3.8 1.2V4H0.4z" fill="#2d2e30" stroke="#6a6c6e" stroke-width="0.5"/></svg>
<svg class="r" style="left:228.40px;top:113.70px;" width="4.2" height="5.2" viewBox="0 0 4.2 5.2"><path d="M0.4 1.2L2.1 0.3 3.8 1.2V4H0.4z" fill="#2d2e30" stroke="#6a6c6e" stroke-width="0.5"/></svg>
<svg class="r" style="left:237.30px;top:101.80px;" width="5.6" height="7.4" viewBox="0 0 5.6 7.4"><circle cx="2.8" cy="2.8" r="2.5" fill="#f0b73a"/><rect x="1.8" y="5.2" width="2" height="1.6" fill="#b0b0b0"/></svg>
<div class="r" style="left:501.97px;top:102.00px;width:0.70px;height:9.50px;background:#d0d0d0;"></div>
<div class="r" style="left:206.70px;top:419.00px;width:444.80px;height:10.00px;background:#2d2e30;"></div>
<div class="t" style="left:235.00px;top:420.20px;font-size:6.3px;line-height:10px;color:#b0b0b0;font-weight:normal;font-family:'Liberation Sans', sans-serif;letter-spacing:-0.08px;">resources</div>
<svg class="r" style="left:267.20px;top:423.20px;" width="2.4" height="4" viewBox="0 0 2.4 4"><path d="M0.3 0.3L2 2L0.3 3.7" stroke="#6a6c6e" stroke-width="0.5" fill="none"/></svg>
<div class="t" style="left:273.60px;top:420.20px;font-size:6.3px;line-height:10px;color:#b0b0b0;font-weight:normal;font-family:'Liberation Sans', sans-serif;letter-spacing:-0.08px;">string</div>
<div class="r" style="left:651.50px;top:44.30px;width:0.70px;height:384.70px;background:#2a2b2d;"></div>
<div class="r" style="left:652.20px;top:44.30px;width:9.80px;height:384.70px;background:#333436;"></div>
<svg class="r" style="left:653.40px;top:48.60px;" width="6.4" height="4.7" viewBox="0 0 7.4 5.4"><path d="M0.2 5.4C0.2 3 1.4 1.2 3.6 1.2 4.4 0.2 6 0 6.8 0.7 7.4 1.2 7.3 2.1 6.8 2.5L6.1 3.2V5.4H5V4.1H2.8V5.4H1.8V4.4C1.3 4.8 0.8 5.1 0.2 5.4z" fill="#b0b0b0"/></svg>
<div class="t" style="left:652.20px;top:57.40px;width:8px;height:16.80px;line-height:8px;text-align:center;writing-mode:vertical-rl;font-size:5.6px;color:#c6c6c6;font-weight:normal;font-family:'Liberation Sans', sans-serif;">Gradle</div>
<svg class="r" style="left:653.60px;top:83.50px;" width="5.4" height="6" viewBox="0 0 5.4 6"><rect x="0.4" y="0.4" width="4.6" height="5.2" fill="none" stroke="#b0b0b0" stroke-width="0.7"/><rect x="1.6" y="1.8" width="2.2" height="2" fill="#b0b0b0"/></svg>
<div class="t" style="left:652.20px;top:91.80px;width:8px;height:40.00px;line-height:8px;text-align:center;writing-mode:vertical-rl;font-size:5.49px;color:#c6c6c6;font-weight:normal;font-family:'Liberation Sans', sans-serif;">Device Manager</div>
<svg class="r" style="left:653.60px;top:326.00px;" width="5.4" height="5.5" viewBox="0 0 5.4 5.5"><rect x="0.4" y="0.4" width="4.6" height="4.7" fill="none" stroke="#b0b0b0" stroke-width="0.7"/></svg>
<div class="t" style="left:651.80px;top:334.20px;width:8px;height:48.80px;line-height:8px;text-align:center;writing-mode:vertical-rl;font-size:5.45px;color:#c6c6c6;font-weight:normal;font-family:'Liberation Sans', sans-serif;">Device File Explorer</div>
<svg class="r" style="left:653.60px;top:393.90px;" width="5.4" height="6" viewBox="0 0 5.4 6"><rect x="0.4" y="1.4" width="4" height="4.2" fill="none" stroke="#b0b0b0" stroke-width="0.7"/><path d="M2.5 0.5h2.5v2.5" stroke="#b0b0b0" stroke-width="0.7" fill="none"/></svg>
<div class="t" style="left:651.80px;top:401.40px;width:8px;height:21.60px;line-height:8px;text-align:center;writing-mode:vertical-rl;font-size:5.4px;color:#c6c6c6;font-weight:normal;font-family:'Liberation Sans', sans-serif;">Emulator</div>
<div class="r" style="left:26.00px;top:428.60px;width:636.00px;height:0.70px;background:#2a2b2d;"></div>
<div class="r" style="left:26.00px;top:429.30px;width:636.00px;height:9.90px;background:#333436;"></div>
<svg class="r" style="left:42.20px;top:431.60px;" width="5.6" height="5.6" viewBox="0 0 5.6 5.6"><path d="M1.2 0.5v4.6M1.2 3.5c2 0 3-1 3-2.5" stroke="#b8babc" stroke-width="0.8" fill="none"/><circle cx="4.2" cy="1" r="0.8" fill="#b8babc"/></svg>
<div class="t" style="left:50.20px;top:429.80px;font-size:5.55px;line-height:10px;color:#c0c0c0;font-weight:normal;font-family:'Liberation Sans', sans-serif;">Version Control</div>
<svg class="r" style="left:97.20px;top:431.60px;" width="5.6" height="5.6" viewBox="0 0 5.6 5.6"><path d="M0.8 0.3L4.6 2.8 0.8 5.3z" fill="#b8babc"/><circle cx="4.6" cy="4.8" r="1" fill="#5fb85f"/></svg>
<div class="t" style="left:105.60px;top:429.80px;font-size:5.55px;line-height:10px;color:#c0c0c0;font-weight:normal;font-family:'Liberation Sans', sans-serif;">Run</div>
<svg class="r" style="left:123.50px;top:431.60px;" width="5.6" height="5.6" viewBox="0 0 5.6 5.6"><path d="M0.5 1h4.6M0.5 2.8h4.6M0.5 4.6h4.6" stroke="#b8babc" stroke-width="0.7"/></svg>
<div class="t" style="left:131.70px;top:429.80px;font-size:5.55px;line-height:10px;color:#c0c0c0;font-weight:normal;font-family:'Liberation Sans', sans-serif;">TODO</div>
<svg class="r" style="left:157.20px;top:431.60px;" width="5.6" height="5.6" viewBox="0 0 5.6 5.6"><circle cx="2.8" cy="2.8" r="2.5" fill="#b8babc"/><path d="M2.8 1.2v2M2.8 3.8v.6" stroke="#333" stroke-width="0.7"/></svg>
<div class="t" style="left:165.00px;top:429.80px;font-size:5.55px;line-height:10px;color:#c0c0c0;font-weight:normal;font-family:'Liberation Sans', sans-serif;">Problems</div>
<svg class="r" style="left:198.90px;top:431.60px;" width="5.6" height="5.6" viewBox="0 0 5.6 5.6"><rect x="0.2" y="0.5" width="5.2" height="4.6" fill="#b8babc"/><path d="M1 1.5l1.2 1-1.2 1M2.8 4h1.6" stroke="#333" stroke-width="0.5" fill="none"/></svg>
<div class="t" style="left:207.50px;top:429.80px;font-size:5.55px;line-height:10px;color:#c0c0c0;font-weight:normal;font-family:'Liberation Sans', sans-serif;">Terminal</div>
<svg class="r" style="left:237.20px;top:431.60px;" width="5.6" height="5.6" viewBox="0 0 5.6 5.6"><path d="M0.5 1.2h4.6M0.5 2.8h2.6M0.5 4.4h4.6" stroke="#b8babc" stroke-width="0.8"/></svg>
<div class="t" style="left:245.80px;top:429.80px;font-size:5.55px;line-height:10px;color:#c0c0c0;font-weight:normal;font-family:'Liberation Sans', sans-serif;">Logcat</div>
<svg class="r" style="left:273.50px;top:431.60px;" width="5.6" height="5.6" viewBox="0 0 5.6 5.6"><rect x="1.4" y="0.3" width="2.8" height="3.6" rx="1.4" fill="#b8babc"/><rect x="1.9" y="3.8" width="1.8" height="1.6" fill="#b8babc"/></svg>
<div class="t" style="left:281.30px;top:429.80px;font-size:5.55px;line-height:10px;color:#c0c0c0;font-weight:normal;font-family:'Liberation Sans', sans-serif;">App Inspection</div>
<svg class="r" style="left:327.60px;top:431.60px;" width="5.6" height="5.6" viewBox="0 0 5.6 5.6"><path d="M0.8 1.8L2 0.5l1 1-.5.5 2.8 3-1 1-2.8-3-.5.5z" fill="#b8babc"/></svg>
<div class="t" style="left:336.00px;top:429.80px;font-size:5.55px;line-height:10px;color:#c0c0c0;font-weight:normal;font-family:'Liberation Sans', sans-serif;">Build</div>
<svg class="r" style="left:358.40px;top:431.60px;" width="5.6" height="5.6" viewBox="0 0 5.6 5.6"><path d="M0.6 4.8a2.2 2.2 0 0 1 4.4 0" stroke="#b8babc" stroke-width="0.8" fill="none"/><path d="M2.8 4.6l1-1.8" stroke="#b8babc" stroke-width="0.7"/></svg>
<div class="t" style="left:366.20px;top:429.80px;font-size:5.55px;line-height:10px;color:#c0c0c0;font-weight:normal;font-family:'Liberation Sans', sans-serif;">Profiler</div>
<svg class="r" style="left:552.50px;top:431.30px;" width="6.2" height="6.2" viewBox="0 0 6.2 6.2"><circle cx="3.1" cy="3.1" r="3" fill="#e6a23a"/><path d="M2.6 1.6h.9v3" stroke="#333" stroke-width="0.7" fill="none"/></svg>
<div class="t" style="left:560.70px;top:429.80px;font-size:5.55px;line-height:10px;color:#c0c0c0;font-weight:normal;font-family:'Liberation Sans', sans-serif;">Event Log</div>
<svg class="r" style="left:596.20px;top:431.60px;" width="5.6" height="5.6" viewBox="0 0 5.6 5.6"><rect x="0.4" y="0.4" width="4" height="3.6" fill="none" stroke="#b8babc" stroke-width="0.6"/><path d="M3.2 3.2l2 2" stroke="#b8babc" stroke-width="0.7"/></svg>
<div class="t" style="left:604.00px;top:429.80px;font-size:5.55px;line-height:10px;color:#c0c0c0;font-weight:normal;font-family:'Liberation Sans', sans-serif;">Layout Inspector</div>
<div class="r" style="left:26.00px;top:439.20px;width:636.00px;height:0.60px;background:#2a2b2d;"></div>
<div class="r" style="left:26px;top:439.8px;width:636px;height:8.70px;background:#333436;border-radius:0 0 5px 5px;box-shadow:inset 0 -0.5px 0 #4a4b4d;"></div>
<svg class="r" style="left:29.20px;top:441.40px;" width="5.8" height="5.6" viewBox="0 0 5.8 5.6"><rect x="1.6" y="0.3" width="4" height="4" fill="none" stroke="#b8babc" stroke-width="0.7"/><path d="M0.4 1.4v3.9h4" stroke="#b8babc" stroke-width="0.7" fill="none"/></svg>
<div class="t" style="left:41.20px;top:440.10px;font-size:5.55px;line-height:10px;color:#c0c0c0;font-weight:normal;font-family:'Liberation Sans', sans-serif;">Launch succeed... (12 minutes ago)</div>
<div class="t" style="left:562.00px;top:440.10px;font-size:5.55px;line-height:10px;color:#c0c0c0;font-weight:normal;font-family:'Liberation Sans', sans-serif;">4:74</div>
<div class="t" style="left:577.80px;top:440.10px;font-size:5.55px;line-height:10px;color:#c0c0c0;font-weight:normal;font-family:'Liberation Sans', sans-serif;">LF</div>
<div class="t" style="left:589.40px;top:440.10px;font-size:5.55px;line-height:10px;color:#6f7173;font-weight:normal;font-family:'Liberation Sans', sans-serif;">UTF-8</div>
<div class="t" style="left:611.00px;top:440.10px;font-size:5.55px;line-height:10px;color:#c0c0c0;font-weight:normal;font-family:'Liberation Sans', sans-serif;">4 spaces</div>
<svg class="r" style="left:638.00px;top:441.30px;" width="5.4" height="5.6" viewBox="0 0 5.4 5.6"><path d="M1 2.4V1.5a1.5 1.5 0 0 1 3 0" stroke="#b8babc" stroke-width="0.6" fill="none"/><rect x="1.6" y="2.6" width="3.4" height="2.8" fill="#b8babc"/></svg>
<svg class="r" style="left:649.80px;top:441.50px;" width="5.6" height="5.2" viewBox="0 0 5.6 5.2"><path d="M0.3 0.5h2.4l.1.4.1-.4h2.4v4.2H0.3z" fill="#b8babc"/><path d="M2.8 1v3.5" stroke="#333" stroke-width="0.4"/></svg>
</body></html>
